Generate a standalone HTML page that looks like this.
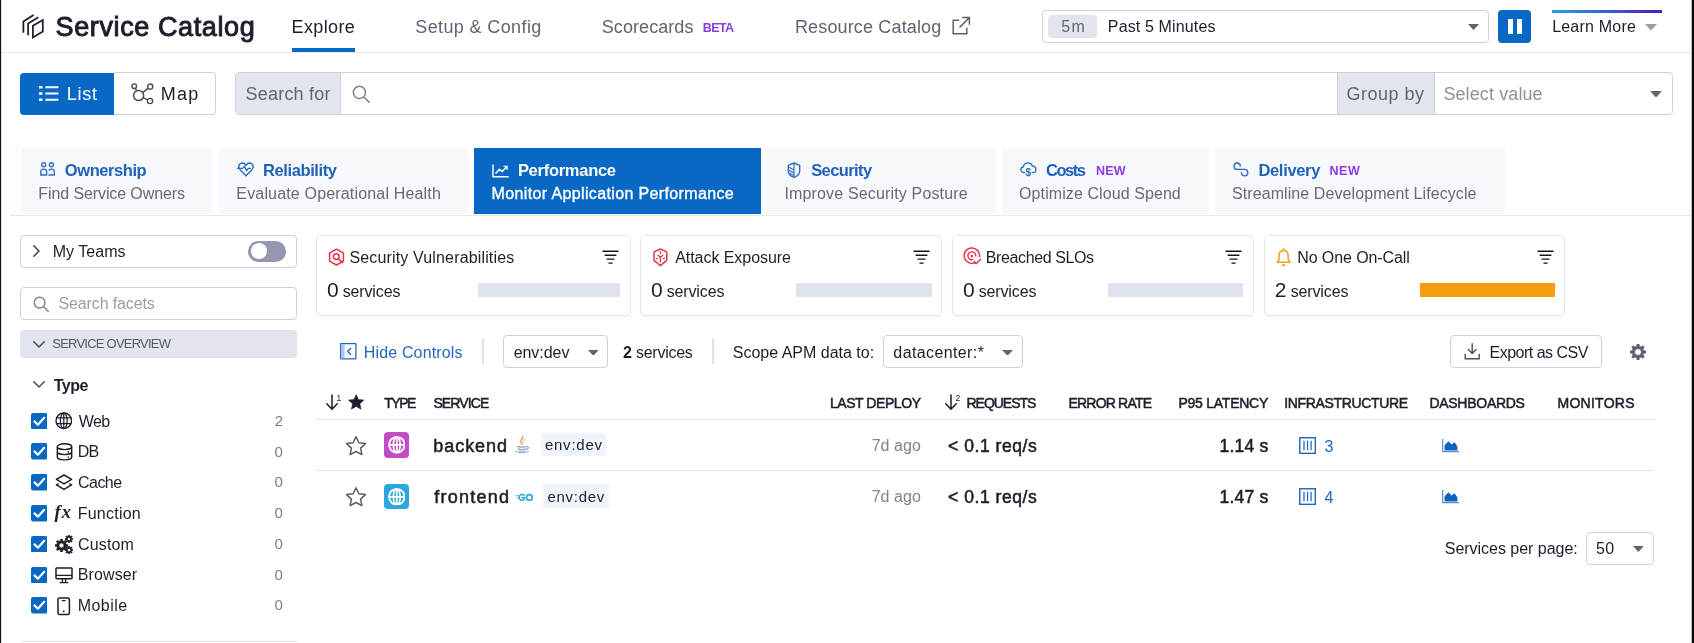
<!DOCTYPE html>
<html lang="en">
<head>
<meta charset="utf-8">
<title>Service Catalog</title>
<style>
html,body{margin:0;padding:0}
body{width:1694px;height:643px;position:relative;overflow:hidden;background:#fff;
 font-family:"Liberation Sans",sans-serif;color:#1c1f2b}
#app{position:absolute;left:0;top:0;width:1694px;height:643px;overflow:hidden;will-change:transform}
#app>div,#app>svg,#app>span{position:absolute;box-sizing:border-box}
#app>span{white-space:nowrap;line-height:1;display:block}
</style>
</head>
<body>
<div id="app">
<div style="left:0px;top:0px;width:1px;height:643px;background:#14141b"></div>
<div style="left:1px;top:0px;width:1px;height:643px;background:#d9d9de"></div>
<div style="left:1692px;top:0px;width:2px;height:643px;background:#0a0a0c"></div>
<div style="left:1691px;top:0px;width:1px;height:643px;background:#b9b9be"></div>
<div style="left:2px;top:52px;width:1689px;height:1px;background:#e6e8ed"></div>
<svg style="left:22px;top:14px;" width="23" height="25" viewBox="0 0 23 25" fill="none"><path d="M1.4 18.8V7.5L11.6 0.9" stroke="#1c1f2b" stroke-width="1.75"/><path d="M6.1 21.3V9.6L16.4 3.2" stroke="#1c1f2b" stroke-width="1.75"/><path d="M10.9 11.7L20.8 6V17.4L10.9 23.4Z" stroke="#1c1f2b" stroke-width="1.75" stroke-linejoin="miter"/></svg>
<div style="left:291.6px;top:47.6px;width:63.8px;height:4.4px;background:#0868c4"></div>
<svg style="left:951px;top:16px;" width="20" height="20" viewBox="0 0 20 20" fill="none"><path d="M8.2 4.2H2.2V17.8H15.8V11.8" stroke="#5f6470" stroke-width="1.5"/><path d="M11.2 1.6H18.4V8.8M18.2 1.8L8.6 11.4" stroke="#5f6470" stroke-width="1.5"/></svg>
<div style="left:1041.8px;top:9.6px;width:447px;height:33.4px;border:1px solid #cdd0da;border-radius:4px;background:#fff"></div>
<div style="left:1048.3px;top:15px;width:49px;height:22.5px;background:#e2e5ed;border-radius:4px"></div>
<svg style="left:1467.5px;top:24px;" width="11" height="6" viewBox="0 0 11 6" fill="none"><path d="M0 0H11L5.5 6Z" fill="#5f6470"/></svg>
<div style="left:1498.3px;top:10px;width:32.7px;height:32.5px;background:#0868c4;border-radius:4px"></div>
<div style="left:1508px;top:19px;width:4.6px;height:14.5px;background:#fff"></div>
<div style="left:1517px;top:19px;width:4.6px;height:14.5px;background:#fff"></div>
<div style="left:1551.6px;top:10px;width:110px;height:2.8px;background:linear-gradient(90deg,#2b9fd9 0%,#3b59cf 55%,#4a1fb8 100%)"></div>
<svg style="left:1645.4px;top:24px;" width="12" height="6.5" viewBox="0 0 12 6.5" fill="none"><path d="M0 0H12L6.0 6.5Z" fill="#9a9da6"/></svg>
<div style="left:20.3px;top:72.5px;width:94.2px;height:42px;background:#0868c4;border-radius:4px 0 0 4px"></div>
<div style="left:114.4px;top:72.4px;width:101.2px;height:42.2px;border:1px solid #cdd0da;border-left:none;border-radius:0 4px 4px 0;background:#fff"></div>
<svg style="left:38.5px;top:85px;" width="20" height="17" viewBox="0 0 20 17" fill="none"><path d="M0 2.2H3.4M0 8.5H3.4M0 14.8H3.4" stroke="#fff" stroke-width="2.6"/><path d="M6.4 2.2H19.4M6.4 8.5H19.4M6.4 14.8H19.4" stroke="#fff" stroke-width="1.9"/></svg>
<svg style="left:130.5px;top:82.5px;" width="23" height="22" viewBox="0 0 23 22" fill="none"><circle cx="7.6" cy="12.6" r="5" stroke="#4a4e5a" stroke-width="1.5"/><circle cx="3.2" cy="3.2" r="2.3" stroke="#4a4e5a" stroke-width="1.4"/><circle cx="19.2" cy="3.6" r="2.6" stroke="#4a4e5a" stroke-width="1.4"/><circle cx="19" cy="18" r="2.6" stroke="#4a4e5a" stroke-width="1.4"/><path d="M4.4 5.2L5.6 8M11.6 9.6L17 5.4M12.2 14.6L16.6 17" stroke="#4a4e5a" stroke-width="1.4"/></svg>
<div style="left:235px;top:72.4px;width:1437.6px;height:42.2px;border:1px solid #cdd0da;border-radius:4px;background:#fff"></div>
<div style="left:236px;top:73.4px;width:105px;height:40.2px;background:#e2e5ed;border-radius:3px 0 0 3px;border-right:1px solid #cdd0da"></div>
<svg style="left:351.8px;top:84.8px;" width="18" height="18" viewBox="0 0 16 16" fill="none"><circle cx="6.6" cy="6.6" r="5.4" stroke="#80848e" stroke-width="1.35"/><path d="M10.6 10.6L15.2 15.2" stroke="#80848e" stroke-width="1.35" stroke-linecap="round"/></svg>
<div style="left:1336.8px;top:73.4px;width:98px;height:40.2px;background:#e2e5ed;border-left:1px solid #cdd0da;border-right:1px solid #cdd0da"></div>
<svg style="left:1650px;top:91px;" width="12" height="6.5" viewBox="0 0 12 6.5" fill="none"><path d="M0 0H12L6.0 6.5Z" fill="#5f6470"/></svg>
<div style="left:10px;top:144px;width:10.5px;height:71px;background:linear-gradient(90deg,#fafbfc,#fdfdfe)"></div>
<div style="left:10px;top:215px;width:1681px;height:1px;background:#e7e8ed"></div>
<div style="left:20.5px;top:148.2px;width:191.5px;height:66px;background:#f7f8fb"></div>
<div style="left:219px;top:148.2px;width:248.5px;height:66px;background:#f7f8fb"></div>
<div style="left:473.8px;top:148.2px;width:287.4px;height:66px;background:#0868c4"></div>
<div style="left:767px;top:148.2px;width:228.5px;height:66px;background:#f7f8fb"></div>
<div style="left:1002.3px;top:148.2px;width:206.7px;height:66px;background:#f7f8fb"></div>
<div style="left:1215px;top:148.2px;width:290px;height:66px;background:#f7f8fb"></div>
<svg style="left:39.6px;top:162.3px;" width="15.4" height="14" viewBox="0 0 15.4 14" fill="none"><circle cx="3.7" cy="2.7" r="2" stroke="#2a6cc0" stroke-width="1.35"/><circle cx="11.4" cy="2.7" r="2" stroke="#2a6cc0" stroke-width="1.35"/><path d="M0.75 13V9.9C0.75 8.1 2 7.1 3.7 7.1S6.65 8.1 6.65 9.9V13H0.75Z" stroke="#2a6cc0" stroke-width="1.35" stroke-linejoin="round"/><path d="M8.9 13H14.4V9.9C14.4 8.1 13.1 7.1 11.4 7.1C10.4 7.1 9.6 7.4 9.1 8" stroke="#2a6cc0" stroke-width="1.35" stroke-linecap="round" stroke-linejoin="round"/></svg>
<svg style="left:236.5px;top:162px;" width="18" height="15" viewBox="0 0 18 15" fill="none"><path d="M9 13.8L3 7.8M15 7.8L9 13.8M2.4 6.4C1.4 4.6 1.8 2.6 3.4 1.6C5.2 0.6 7.4 1.2 9 3.2C10.6 1.2 12.8 0.6 14.6 1.6C16.2 2.6 16.6 4.6 15.6 6.4" stroke="#2a6cc0" stroke-width="1.4" stroke-linecap="round"/><path d="M0.6 6.4H5.6L7.4 4.2L9.6 8.6L11.4 6.4H13.4" stroke="#2a6cc0" stroke-width="1.3" stroke-linejoin="round" stroke-linecap="round"/></svg>
<svg style="left:491.5px;top:163.5px;" width="17" height="14" viewBox="0 0 17 14" fill="none"><path d="M1 0.5V12.8H16.6" stroke="#fff" stroke-width="1.5"/><path d="M3.6 9.4L7.4 5.2L10.2 7.6L14.6 2.8" stroke="#fff" stroke-width="1.5" stroke-linejoin="round"/><path d="M11.6 2.4H15V5.8" stroke="#fff" stroke-width="1.4"/></svg>
<svg style="left:786.6px;top:161.6px;" width="14" height="16.4" viewBox="0 0 14 16.4" fill="none"><path d="M7 1L12.7 3.3V9.3C12.7 12 10.2 14.2 7 15.4C3.8 14.2 1.3 12 1.3 9.3V3.3Z" stroke="#2a6cc0" stroke-width="1.35" stroke-linejoin="round"/><path d="M7 1V15.4M1.5 4.9L7 8.1M1.5 7.9L7 11.1M2.3 10.9L7 13.7" stroke="#2a6cc0" stroke-width="1.15"/></svg>
<svg style="left:1019.8px;top:162.2px;" width="17" height="15" viewBox="0 0 17 15" fill="none"><path d="M4.8 10.6H4C2.3 10.6 0.9 9.3 0.9 7.7C0.9 6.3 1.9 5.1 3.4 4.9C3.6 2.7 5.5 0.9 8 0.9C10.1 0.9 11.8 2.2 12.4 4C14.3 4.2 15.9 5.6 15.9 7.4C15.9 9.2 14.5 10.6 12.6 10.6H12" stroke="#2a6cc0" stroke-width="1.3" stroke-linecap="round"/><text x="8.4" y="13.6" text-anchor="middle" font-family="Liberation Sans, sans-serif" font-weight="700" font-size="10" fill="#2a6cc0">$</text></svg>
<svg style="left:1233.2px;top:161.8px;" width="16" height="15.4" viewBox="0 0 16 15.4" fill="none"><path d="M4.2 7.4C2.4 7.4 1 6 1 4.2S2.4 1 4.2 1S7.3 2.4 7.3 4.2" stroke="#2a6cc0" stroke-width="1.35" stroke-linecap="round"/><path d="M4.2 7.4H11.6C13.5 7.4 14.8 8.9 14.8 10.6S13.5 13.9 11.6 13.9S8.5 12.4 8.5 10.6" stroke="#2a6cc0" stroke-width="1.35" stroke-linecap="round"/></svg>
<div style="left:20px;top:234.5px;width:277px;height:33px;border:1px solid #cdd0da;border-radius:4px;background:#fff"></div>
<svg style="left:33.3px;top:245.2px;" width="7" height="12" viewBox="0 0 7 12" fill="none"><path d="M0.8 0.8L6 6L0.8 11.2" stroke="#3d414d" stroke-width="1.5" stroke-linecap="round" stroke-linejoin="round"/></svg>
<div style="left:248.3px;top:240.5px;width:37.5px;height:21px;background:#9397b1;border-radius:11px"></div>
<div style="left:250.8px;top:243px;width:16px;height:16px;background:#fff;border-radius:8px"></div>
<div style="left:20px;top:286.6px;width:277px;height:33.2px;border:1px solid #cdd0da;border-radius:4px;background:#fff"></div>
<svg style="left:32.5px;top:296.2px;" width="16" height="16" viewBox="0 0 16 16" fill="none"><circle cx="6.6" cy="6.6" r="5.4" stroke="#7b7f8a" stroke-width="1.4"/><path d="M10.6 10.6L15.2 15.2" stroke="#7b7f8a" stroke-width="1.4" stroke-linecap="round"/></svg>
<div style="left:20.3px;top:329.6px;width:276.4px;height:28px;background:#e2e5ed;border-radius:4px"></div>
<svg style="left:33.3px;top:340.5px;" width="12" height="7" viewBox="0 0 12 7" fill="none"><path d="M0.8 0.8L6 6L11.2 0.8" stroke="#4a4e5a" stroke-width="1.5" stroke-linecap="round" stroke-linejoin="round"/></svg>
<svg style="left:33.3px;top:381px;" width="12" height="7" viewBox="0 0 12 7" fill="none"><path d="M0.8 0.8L6 6L11.2 0.8" stroke="#4a4e5a" stroke-width="1.5" stroke-linecap="round" stroke-linejoin="round"/></svg>
<svg style="left:30.7px;top:412.7px;" width="16.5" height="16.5" viewBox="0 0 16.5 16.5" fill="none"><rect x="0" y="0" width="16.5" height="16.5" rx="2.2" fill="#0868c4"/><path d="M3.5 8.4L6.9 11.7L13.2 4.8" stroke="#fff" stroke-width="2.2" stroke-linecap="round" stroke-linejoin="round"/></svg>
<svg style="left:54.900000000000006px;top:412.09999999999997px;" width="17.6" height="17.6" viewBox="0 0 17.6 17.6" fill="none"><circle cx="8.8" cy="8.8" r="7.8" stroke="#1c1f2b" stroke-width="1.4"/><ellipse cx="8.8" cy="8.8" rx="3.43" ry="7.8" stroke="#1c1f2b" stroke-width="1.26"/><path d="M1.52 5.99H16.08M1.52 11.61H16.08M8.8 1V16.6" stroke="#1c1f2b" stroke-width="1.26"/></svg>
<svg style="left:30.7px;top:443.46999999999997px;" width="16.5" height="16.5" viewBox="0 0 16.5 16.5" fill="none"><rect x="0" y="0" width="16.5" height="16.5" rx="2.2" fill="#0868c4"/><path d="M3.5 8.4L6.9 11.7L13.2 4.8" stroke="#fff" stroke-width="2.2" stroke-linecap="round" stroke-linejoin="round"/></svg>
<svg style="left:55.6px;top:442.86999999999995px;" width="17" height="18" viewBox="0 0 17 18" fill="none"><ellipse cx="8.5" cy="3.7" rx="7.2" ry="2.9" stroke="#1c1f2b" stroke-width="1.4"/><path d="M1.3 3.7V14C1.3 15.6 4.5 16.9 8.5 16.9S15.7 15.6 15.7 14V3.7M1.3 8.7C1.3 10.3 4.5 11.6 8.5 11.6S15.7 10.3 15.7 8.7" stroke="#1c1f2b" stroke-width="1.4"/><circle cx="12.3" cy="8.9" r="0.8" fill="#1c1f2b"/><circle cx="12.3" cy="14" r="0.8" fill="#1c1f2b"/></svg>
<svg style="left:30.7px;top:474.24px;" width="16.5" height="16.5" viewBox="0 0 16.5 16.5" fill="none"><rect x="0" y="0" width="16.5" height="16.5" rx="2.2" fill="#0868c4"/><path d="M3.5 8.4L6.9 11.7L13.2 4.8" stroke="#fff" stroke-width="2.2" stroke-linecap="round" stroke-linejoin="round"/></svg>
<svg style="left:55px;top:473.94px;" width="18" height="17" viewBox="0 0 18 17" fill="none"><path d="M9 1L16.6 5.4L9 9.8L1.4 5.4Z" stroke="#1c1f2b" stroke-width="1.5" stroke-linejoin="round"/><path d="M3.6 9.6L1.4 10.9L9 15.4L16.6 10.9L14.4 9.6" stroke="#1c1f2b" stroke-width="1.5" stroke-linejoin="round"/></svg>
<svg style="left:30.7px;top:505.01000000000005px;" width="16.5" height="16.5" viewBox="0 0 16.5 16.5" fill="none"><rect x="0" y="0" width="16.5" height="16.5" rx="2.2" fill="#0868c4"/><path d="M3.5 8.4L6.9 11.7L13.2 4.8" stroke="#fff" stroke-width="2.2" stroke-linecap="round" stroke-linejoin="round"/></svg>
<span style="left:54.6px;top:503px;font-family:'Liberation Serif',serif;font-style:italic;font-weight:700;font-size:18.5px;line-height:1;color:#1c1f2b;letter-spacing:1px;white-space:nowrap">fx</span>
<svg style="left:30.7px;top:535.78px;" width="16.5" height="16.5" viewBox="0 0 16.5 16.5" fill="none"><rect x="0" y="0" width="16.5" height="16.5" rx="2.2" fill="#0868c4"/><path d="M3.5 8.4L6.9 11.7L13.2 4.8" stroke="#fff" stroke-width="2.2" stroke-linecap="round" stroke-linejoin="round"/></svg>
<svg style="left:54.8px;top:538.78px;" width="13" height="13" viewBox="0 0 12.2 12.2" fill="none"><path d="M5.08 1.70L5.29 0.05L6.91 0.05L7.12 1.70L8.49 2.27L9.80 1.25L10.95 2.40L9.93 3.71L10.50 5.08L12.15 5.29L12.15 6.91L10.50 7.12L9.93 8.49L10.95 9.80L9.80 10.95L8.49 9.93L7.12 10.50L6.91 12.15L5.29 12.15L5.08 10.50L3.71 9.93L2.40 10.95L1.25 9.80L2.27 8.49L1.70 7.12L0.05 6.91L0.05 5.29L1.70 5.08L2.27 3.71L1.25 2.40L2.40 1.25L3.71 2.27ZM8.42 6.10A2.32 2.32 0 1 0 3.78 6.10A2.32 2.32 0 1 0 8.42 6.10Z" fill="#1c1f2b" fill-rule="evenodd" stroke="#1c1f2b" stroke-width="0.6" stroke-linejoin="round"/></svg>
<svg style="left:65.4px;top:534.78px;" width="8" height="8" viewBox="0 0 7.7 7.7" fill="none"><path d="M3.21 1.07L3.34 0.03L4.36 0.03L4.49 1.07L5.36 1.43L6.19 0.79L6.91 1.51L6.27 2.34L6.63 3.21L7.67 3.34L7.67 4.36L6.63 4.49L6.27 5.36L6.91 6.19L6.19 6.91L5.36 6.27L4.49 6.63L4.36 7.67L3.34 7.67L3.21 6.63L2.34 6.27L1.51 6.91L0.79 6.19L1.43 5.36L1.07 4.49L0.03 4.36L0.03 3.34L1.07 3.21L1.43 2.34L0.79 1.51L1.51 0.79L2.34 1.43ZM5.39 3.85A1.54 1.54 0 1 0 2.31 3.85A1.54 1.54 0 1 0 5.39 3.85Z" fill="#1c1f2b" fill-rule="evenodd" stroke="#1c1f2b" stroke-width="0.6" stroke-linejoin="round"/></svg>
<svg style="left:65.4px;top:545.58px;" width="8" height="8" viewBox="0 0 7.7 7.7" fill="none"><path d="M3.21 1.07L3.34 0.03L4.36 0.03L4.49 1.07L5.36 1.43L6.19 0.79L6.91 1.51L6.27 2.34L6.63 3.21L7.67 3.34L7.67 4.36L6.63 4.49L6.27 5.36L6.91 6.19L6.19 6.91L5.36 6.27L4.49 6.63L4.36 7.67L3.34 7.67L3.21 6.63L2.34 6.27L1.51 6.91L0.79 6.19L1.43 5.36L1.07 4.49L0.03 4.36L0.03 3.34L1.07 3.21L1.43 2.34L0.79 1.51L1.51 0.79L2.34 1.43ZM5.39 3.85A1.54 1.54 0 1 0 2.31 3.85A1.54 1.54 0 1 0 5.39 3.85Z" fill="#1c1f2b" fill-rule="evenodd" stroke="#1c1f2b" stroke-width="0.6" stroke-linejoin="round"/></svg>
<svg style="left:30.7px;top:566.55px;" width="16.5" height="16.5" viewBox="0 0 16.5 16.5" fill="none"><rect x="0" y="0" width="16.5" height="16.5" rx="2.2" fill="#0868c4"/><path d="M3.5 8.4L6.9 11.7L13.2 4.8" stroke="#fff" stroke-width="2.2" stroke-linecap="round" stroke-linejoin="round"/></svg>
<svg style="left:55px;top:566.75px;" width="18" height="17" viewBox="0 0 18 17" fill="none"><rect x="1" y="1" width="16" height="10.8" rx="0.8" stroke="#1c1f2b" stroke-width="1.5"/><path d="M1 8.4H17M7.4 12V15.4M10.6 12V15.4M4.6 15.6H13.4" stroke="#1c1f2b" stroke-width="1.4"/></svg>
<svg style="left:30.7px;top:597.3199999999999px;" width="16.5" height="16.5" viewBox="0 0 16.5 16.5" fill="none"><rect x="0" y="0" width="16.5" height="16.5" rx="2.2" fill="#0868c4"/><path d="M3.5 8.4L6.9 11.7L13.2 4.8" stroke="#fff" stroke-width="2.2" stroke-linecap="round" stroke-linejoin="round"/></svg>
<svg style="left:57.3px;top:596.52px;" width="14" height="19" viewBox="0 0 14 19" fill="none"><rect x="1" y="1" width="11.4" height="16.6" rx="1.6" stroke="#1c1f2b" stroke-width="1.5"/><path d="M4.8 3.6H8.6" stroke="#1c1f2b" stroke-width="1.2"/><circle cx="6.7" cy="14.4" r="0.9" fill="#1c1f2b"/></svg>
<div style="left:20.5px;top:640.6px;width:276px;height:1.2px;background:#dfe2e9"></div>
<div style="left:316.2px;top:234.5px;width:314.8px;height:81px;border:1px solid #e2e4eb;border-radius:5px;background:#fff;box-shadow:0 1px 2px rgba(40,45,70,0.05)"></div>
<svg style="left:602.3px;top:250.2px;" width="17" height="14.5" viewBox="0 0 17 14.5" fill="none"><path d="M0.5 1.2H16.5M2.7 5.2H14.4M4.6 9.1H12.5M6.5 13.1H10.6" stroke="#14161f" stroke-width="1.45"/></svg>
<div style="left:478.2px;top:283.3px;width:141.7px;height:13.8px;background:#dfe3ed"></div>
<div style="left:640.2px;top:234.5px;width:301.79999999999995px;height:81px;border:1px solid #e2e4eb;border-radius:5px;background:#fff;box-shadow:0 1px 2px rgba(40,45,70,0.05)"></div>
<svg style="left:913.3px;top:250.2px;" width="17" height="14.5" viewBox="0 0 17 14.5" fill="none"><path d="M0.5 1.2H16.5M2.7 5.2H14.4M4.6 9.1H12.5M6.5 13.1H10.6" stroke="#14161f" stroke-width="1.45"/></svg>
<div style="left:796.4px;top:283.3px;width:135.20000000000005px;height:13.8px;background:#dfe3ed"></div>
<div style="left:952.2px;top:234.5px;width:301.79999999999995px;height:81px;border:1px solid #e2e4eb;border-radius:5px;background:#fff;box-shadow:0 1px 2px rgba(40,45,70,0.05)"></div>
<svg style="left:1225.3px;top:250.2px;" width="17" height="14.5" viewBox="0 0 17 14.5" fill="none"><path d="M0.5 1.2H16.5M2.7 5.2H14.4M4.6 9.1H12.5M6.5 13.1H10.6" stroke="#14161f" stroke-width="1.45"/></svg>
<div style="left:1107.5px;top:283.3px;width:135.9000000000001px;height:13.8px;background:#dfe3ed"></div>
<div style="left:1264.2px;top:234.5px;width:301.0px;height:81px;border:1px solid #e2e4eb;border-radius:5px;background:#fff;box-shadow:0 1px 2px rgba(40,45,70,0.05)"></div>
<svg style="left:1536.5px;top:250.2px;" width="17" height="14.5" viewBox="0 0 17 14.5" fill="none"><path d="M0.5 1.2H16.5M2.7 5.2H14.4M4.6 9.1H12.5M6.5 13.1H10.6" stroke="#14161f" stroke-width="1.45"/></svg>
<div style="left:1419.7px;top:283.3px;width:135.0999999999999px;height:13.8px;background:#f89d0e"></div>
<svg style="left:327.5px;top:248px;" width="17" height="19" viewBox="0 0 17 19" fill="none"><path d="M8.5 1.2L15.4 5.1V13.1L8.5 17L1.6 13.1V5.1Z" stroke="#e0354b" stroke-width="1.5" stroke-linejoin="round"/><circle cx="8.3" cy="8.6" r="2.9" stroke="#e0354b" stroke-width="1.5"/><path d="M10.4 10.8L15 14.8" stroke="#e0354b" stroke-width="1.6"/></svg>
<svg style="left:653.3px;top:247.6px;" width="15" height="19" viewBox="0 0 15 19" fill="none"><path d="M7.4 1L13.8 3.9V12.4L7.4 17.6L1 12.4V3.9Z" stroke="#e0354b" stroke-width="1.45" stroke-linejoin="round"/><path d="M7.4 14.2V9.4L4.9 7.1M7.4 9.4L9.9 7.1M7.4 3.6V5.6M3.3 10.6H4.5M10.3 10.6H11.5" stroke="#e0354b" stroke-width="1.3" stroke-linecap="round" stroke-linejoin="round"/></svg>
<svg style="left:963px;top:247.2px;" width="18.5" height="18.5" viewBox="0 0 18.5 18.5" fill="none"><path d="M12.2 15.6A7.7 7.7 0 1 1 16.5 9.6" stroke="#e0354b" stroke-width="1.5" stroke-linecap="round"/><path d="M9.6 12.6A3.9 3.9 0 1 1 12.7 8.9" stroke="#e0354b" stroke-width="1.4" stroke-linecap="round"/><circle cx="8.8" cy="8.9" r="1.25" fill="#e0354b"/><path d="M11.2 14.6L13.3 16.6L17.4 12.4" stroke="#e0354b" stroke-width="1.5" stroke-linecap="round" stroke-linejoin="round"/></svg>
<svg style="left:1276.4px;top:248px;" width="15.4" height="19" viewBox="0 0 15.4 19" fill="none"><path d="M7.6 2.4C4.7 2.4 3.1 4.7 3.1 7.4V11.2L1.2 14.2H14L12.1 11.2V7.4C12.1 4.7 10.5 2.4 7.6 2.4Z" stroke="#f39a1f" stroke-width="1.45" stroke-linejoin="round"/><path d="M7.6 0.8V2.2" stroke="#f39a1f" stroke-width="1.5" stroke-linecap="round"/><path d="M6.7 17.2H8.5" stroke="#f39a1f" stroke-width="1.8" stroke-linecap="round"/></svg>
<svg style="left:339.6px;top:343.2px;" width="17" height="17" viewBox="0 0 17 17" fill="none"><rect x="0.7" y="0.7" width="15.2" height="15.2" rx="0.4" stroke="#2367ba" stroke-width="1.3"/><rect x="1.2" y="1.2" width="3.4" height="14.2" fill="#a9c6ea"/><path d="M10.6 5.4L7.6 8.3L10.6 11.2" stroke="#2367ba" stroke-width="1.4" stroke-linecap="round" stroke-linejoin="round"/></svg>
<div style="left:482px;top:339px;width:1.8px;height:25px;background:#dfe2e9"></div>
<div style="left:503px;top:335px;width:105.4px;height:33px;border:1px solid #cdd0da;border-radius:4px;background:#fff"></div>
<svg style="left:587.9px;top:349.6px;" width="10.6" height="5.8" viewBox="0 0 10.6 5.8" fill="none"><path d="M0 0H10.6L5.3 5.8Z" fill="#5f6470"/></svg>
<div style="left:712.2px;top:339px;width:1.8px;height:25px;background:#dfe2e9"></div>
<div style="left:882.8px;top:335px;width:140.6px;height:33px;border:1px solid #cdd0da;border-radius:4px;background:#fff"></div>
<svg style="left:1002.4px;top:349.6px;" width="11" height="5.8" viewBox="0 0 11 5.8" fill="none"><path d="M0 0H11L5.5 5.8Z" fill="#5f6470"/></svg>
<div style="left:1450px;top:335px;width:152px;height:33px;border:1px solid #cdd0da;border-radius:4px;background:#fff"></div>
<svg style="left:1464.3px;top:343px;" width="17" height="17" viewBox="0 0 17 17" fill="none"><path d="M8.2 0.8V10.2M4.3 6.5L8.2 10.4L12.1 6.5" stroke="#4a4e5a" stroke-width="1.4" stroke-linecap="round" stroke-linejoin="round"/><path d="M1.2 10.8V15.8H15.2V10.8" stroke="#4a4e5a" stroke-width="1.4"/></svg>
<svg style="left:1629.6px;top:344.3px;" width="16" height="16" viewBox="0 0 15.4 15.4" fill="none"><path d="M6.41 2.15L6.67 0.07L8.73 0.07L8.99 2.15L10.72 2.87L12.37 1.58L13.82 3.03L12.53 4.68L13.25 6.41L15.33 6.67L15.33 8.73L13.25 8.99L12.53 10.72L13.82 12.37L12.37 13.82L10.72 12.53L8.99 13.25L8.73 15.33L6.67 15.33L6.41 13.25L4.68 12.53L3.03 13.82L1.58 12.37L2.87 10.72L2.15 8.99L0.07 8.73L0.07 6.67L2.15 6.41L2.87 4.68L1.58 3.03L3.03 1.58L4.68 2.87ZM10.93 7.70A3.23 3.23 0 1 0 4.47 7.70A3.23 3.23 0 1 0 10.93 7.70Z" fill="#5a5e6b" fill-rule="evenodd" stroke="#5a5e6b" stroke-width="0.6" stroke-linejoin="round"/></svg>
<svg style="left:326.3px;top:394.2px;" width="16" height="17" viewBox="0 0 16 17" fill="none"><path d="M6 1V15M0.8 9.8L6 15.2L11.2 9.8" stroke="#1c1f2b" stroke-width="1.5" stroke-linecap="round" stroke-linejoin="round"/><text x="10.6" y="7" font-family="Liberation Sans, sans-serif" font-size="8.5" fill="#1c1f2b">1</text></svg>
<svg style="left:348.2px;top:393.8px;" width="16.4" height="15.8" viewBox="0 0 16 15" fill="none"><path d="M8 0.3L10.2 5.1L15.6 5.7L11.6 9.3L12.7 14.6L8 11.9L3.3 14.6L4.4 9.3L0.4 5.7L5.8 5.1Z" fill="#1c1f2b" stroke="#1c1f2b" stroke-width="0.5" stroke-linejoin="round"/></svg>
<svg style="left:944.8px;top:394.2px;" width="16" height="17" viewBox="0 0 16 17" fill="none"><path d="M6 1V15M0.8 9.8L6 15.2L11.2 9.8" stroke="#1c1f2b" stroke-width="1.5" stroke-linecap="round" stroke-linejoin="round"/><text x="10.6" y="7" font-family="Liberation Sans, sans-serif" font-size="8.5" fill="#1c1f2b">2</text></svg>
<div style="left:316.3px;top:419px;width:1337.5px;height:1.3px;background:#e1e3ea"></div>
<div style="left:316.3px;top:470px;width:1337.5px;height:1.3px;background:#e1e3ea"></div>
<svg style="left:345.2px;top:434.7px;" width="22" height="21" viewBox="0 0 21 20" fill="none"><path d="M10.5 1.6L13.2 7.4L19.5 8.2L14.9 12.5L16.1 18.7L10.5 15.7L4.9 18.7L6.1 12.5L1.5 8.2L7.8 7.4Z" stroke="#5a5e6a" stroke-width="1.45" stroke-linejoin="round"/></svg>
<div style="left:383.9px;top:432.3px;width:25.4px;height:25.6px;background:#c24cc6;border-radius:4px"></div>
<svg style="left:387.8px;top:436.3px;" width="17.6" height="17.6" viewBox="0 0 17.6 17.6" fill="none"><circle cx="8.8" cy="8.8" r="7.8" stroke="#ffffff" stroke-width="1.9"/><ellipse cx="8.8" cy="8.8" rx="3.43" ry="7.8" stroke="#ffffff" stroke-width="1.71"/><path d="M1 8.8H16.6M8.8 1V16.6" stroke="#ffffff" stroke-width="1.71"/></svg>
<div style="left:540.6px;top:432.90000000000003px;width:65.39999999999998px;height:23.4px;background:#f1f5fb;border-radius:3px"></div>
<svg style="left:1298.6px;top:436.6px;" width="17.3" height="17.3" viewBox="0 0 18 18" fill="none"><rect x="0.8" y="0.8" width="16.2" height="16.2" stroke="#2367ba" stroke-width="1.5"/><path d="M5.2 4V13.8M8.9 4V13.8M12.6 4V13.8" stroke="#2367ba" stroke-width="1.3"/></svg>
<svg style="left:1442px;top:438.7px;" width="18" height="14" viewBox="0 0 18 14" fill="none"><path d="M0.7 0V12.6H17" stroke="#2367ba" stroke-width="1.2" opacity="0.75"/><path d="M2.6 11.4V6.2L6.4 2.2L9.6 5.6L12.6 3.2L15.4 7.6V11.4Z" fill="#0f63be"/></svg>
<svg style="left:345.2px;top:486.0px;" width="22" height="21" viewBox="0 0 21 20" fill="none"><path d="M10.5 1.6L13.2 7.4L19.5 8.2L14.9 12.5L16.1 18.7L10.5 15.7L4.9 18.7L6.1 12.5L1.5 8.2L7.8 7.4Z" stroke="#5a5e6a" stroke-width="1.45" stroke-linejoin="round"/></svg>
<div style="left:383.9px;top:483.6px;width:25.4px;height:25.6px;background:#2aa7dc;border-radius:4px"></div>
<svg style="left:387.8px;top:487.6px;" width="17.6" height="17.6" viewBox="0 0 17.6 17.6" fill="none"><circle cx="8.8" cy="8.8" r="7.8" stroke="#ffffff" stroke-width="1.9"/><ellipse cx="8.8" cy="8.8" rx="3.43" ry="7.8" stroke="#ffffff" stroke-width="1.71"/><path d="M1 8.8H16.6M8.8 1V16.6" stroke="#ffffff" stroke-width="1.71"/></svg>
<div style="left:543px;top:484.20000000000005px;width:66px;height:23.4px;background:#f1f5fb;border-radius:3px"></div>
<svg style="left:1298.6px;top:487.90000000000003px;" width="17.3" height="17.3" viewBox="0 0 18 18" fill="none"><rect x="0.8" y="0.8" width="16.2" height="16.2" stroke="#2367ba" stroke-width="1.5"/><path d="M5.2 4V13.8M8.9 4V13.8M12.6 4V13.8" stroke="#2367ba" stroke-width="1.3"/></svg>
<svg style="left:1442px;top:490.0px;" width="18" height="14" viewBox="0 0 18 14" fill="none"><path d="M0.7 0V12.6H17" stroke="#2367ba" stroke-width="1.2" opacity="0.75"/><path d="M2.6 11.4V6.2L6.4 2.2L9.6 5.6L12.6 3.2L15.4 7.6V11.4Z" fill="#0f63be"/></svg>
<svg style="left:513.6px;top:436px;" width="16" height="19" viewBox="0 0 16 19" fill="none"><path d="M8.4 0.6C9.6 2.6 5.6 4 7.2 6.4C7.6 7 8.2 7.4 8.2 8.4" stroke="#f0883a" stroke-width="1.2" stroke-linecap="round"/><path d="M10.6 3.4C9.4 4.4 9.2 5.2 10 6.4" stroke="#f4a86a" stroke-width="1" stroke-linecap="round"/><path d="M3.4 10.4C6 11.2 10 11.2 12.4 10.4M4 12.8C6.4 13.6 9.6 13.6 11.8 12.8M12.8 10.6C14.8 10.4 15 12.6 12.6 13.4" stroke="#7b9cc4" stroke-width="1.1" stroke-linecap="round"/><path d="M1.6 15.6C4.6 17 11.4 17 14.4 15.6M4.8 14.8C7 15.4 9.4 15.4 11.2 14.8" stroke="#9db6d6" stroke-width="1.1" stroke-linecap="round"/></svg>
<svg style="left:515px;top:492.6px;" width="19" height="9" viewBox="0 0 19 9" fill="none"><path d="M0.4 2.6H3.6M1.6 4.6H3.4" stroke="#5fc3e6" stroke-width="0.9" stroke-linecap="round"/><path d="M9.4 2.6C8.6 1.6 7.6 1.2 6.6 1.4C4.8 1.8 4 3.4 4.2 4.8C4.4 6.6 6 7.6 7.6 7.2C8.8 7 9.6 6.2 9.8 4.8H7" stroke="#2ba6da" stroke-width="1.5" stroke-linecap="round" stroke-linejoin="round"/><ellipse cx="14.4" cy="4.4" rx="2.9" ry="2.8" stroke="#2ba6da" stroke-width="1.6"/></svg>
<div style="left:1586px;top:531.6px;width:67.8px;height:33.2px;border:1px solid #cdd0da;border-radius:4px;background:#fff"></div>
<svg style="left:1632.5px;top:545.5px;" width="10.8" height="6" viewBox="0 0 10.8 6" fill="none"><path d="M0 0H10.8L5.4 6Z" fill="#5f6470"/></svg>
<span id="t0" style="left:55.54px;top:14px;font-size:27px;color:#1c1f2b;letter-spacing:0.617px;-webkit-text-stroke:0.95px #1c1f2b;">Service Catalog</span>
<span id="t1" style="left:291.54px;top:18px;font-size:18px;color:#1c1f2b;letter-spacing:0.373px;">Explore</span>
<span id="t2" style="left:415.30px;top:18px;font-size:18px;color:#5f6470;letter-spacing:0.377px;">Setup &amp; Config</span>
<span id="t3" style="left:601.80px;top:18px;font-size:18px;color:#5f6470;letter-spacing:0.063px;">Scorecards</span>
<span id="t4" style="left:702.86px;top:22px;font-size:12.5px;font-weight:700;color:#8d3be6;letter-spacing:-0.652px;">BETA</span>
<span id="t5" style="left:794.94px;top:18px;font-size:18px;color:#5f6470;letter-spacing:0.151px;">Resource Catalog</span>
<span id="t6" style="left:1061.20px;top:19px;font-size:16px;color:#5f6470;letter-spacing:1.300px;">5m</span>
<span id="t7" style="left:1107.84px;top:19px;font-size:16px;color:#1c1f2b;letter-spacing:0.139px;">Past 5 Minutes</span>
<span id="t8" style="left:1552.14px;top:19px;font-size:16px;color:#1c1f2b;letter-spacing:0.209px;">Learn More</span>
<span id="t9" style="left:66.64px;top:85px;font-size:18px;color:#ffffff;letter-spacing:0.786px;">List</span>
<span id="t10" style="left:160.84px;top:85px;font-size:18px;color:#1c1f2b;letter-spacing:1.212px;">Map</span>
<span id="t11" style="left:245.50px;top:85px;font-size:18px;color:#5f6470;letter-spacing:0.216px;">Search for</span>
<span id="t12" style="left:1346.60px;top:85px;font-size:18px;color:#5f6470;letter-spacing:0.471px;">Group by</span>
<span id="t13" style="left:1443.40px;top:85px;font-size:18px;color:#8e919b;letter-spacing:0.107px;">Select value</span>
<span id="t14" style="left:64.87px;top:162px;font-size:16.5px;font-weight:700;color:#1f62b8;letter-spacing:-0.435px;">Ownership</span>
<span id="t15" style="left:38.34px;top:186px;font-size:16px;color:#666a76;letter-spacing:-0.102px;">Find Service Owners</span>
<span id="t16" style="left:263.00px;top:162px;font-size:16.5px;font-weight:700;color:#1f62b8;letter-spacing:-0.391px;">Reliability</span>
<span id="t17" style="left:236.34px;top:186px;font-size:16px;color:#666a76;letter-spacing:0.167px;">Evaluate Operational Health</span>
<span id="t18" style="left:517.90px;top:162px;font-size:16.5px;font-weight:700;color:#ffffff;letter-spacing:-0.274px;">Performance</span>
<span id="t19" style="left:491.60px;top:186px;font-size:16px;color:#ffffff;letter-spacing:0.365px;-webkit-text-stroke:0.35px #fff;">Monitor Application Performance</span>
<span id="t20" style="left:811.17px;top:162px;font-size:16.5px;font-weight:700;color:#1f62b8;letter-spacing:-0.581px;">Security</span>
<span id="t21" style="left:784.44px;top:186px;font-size:16px;color:#666a76;letter-spacing:0.155px;">Improve Security Posture</span>
<span id="t22" style="left:1045.97px;top:162px;font-size:16.5px;font-weight:700;color:#1f62b8;letter-spacing:-1.498px;">Costs</span>
<span id="t23" style="left:1095.96px;top:165px;font-size:12.5px;font-weight:700;color:#8d3be6;letter-spacing:0.220px;">NEW</span>
<span id="t24" style="left:1019.10px;top:186px;font-size:16px;color:#666a76;letter-spacing:0.083px;">Optimize Cloud Spend</span>
<span id="t25" style="left:1258.40px;top:162px;font-size:16.5px;font-weight:700;color:#1f62b8;letter-spacing:-0.314px;">Delivery</span>
<span id="t26" style="left:1329.46px;top:165px;font-size:12.5px;font-weight:700;color:#8d3be6;letter-spacing:0.620px;">NEW</span>
<span id="t27" style="left:1232.00px;top:186px;font-size:16px;color:#666a76;letter-spacing:0.084px;">Streamline Development Lifecycle</span>
<span id="t28" style="left:52.64px;top:244px;font-size:16px;color:#1c1f2b;letter-spacing:0.052px;">My Teams</span>
<span id="t29" style="left:58.50px;top:296px;font-size:16px;color:#9a9da6;letter-spacing:-0.130px;">Search facets</span>
<span id="t30" style="left:52.30px;top:337px;font-size:13px;color:#555a66;letter-spacing:-0.772px;">SERVICE OVERVIEW</span>
<span id="t31" style="left:53.75px;top:378px;font-size:16px;font-weight:700;color:#1c1f2b;letter-spacing:-0.530px;">Type</span>
<span id="t32" style="left:78.73px;top:414px;font-size:16px;color:#1c1f2b;letter-spacing:-0.614px;">Web</span>
<span id="t33" style="left:274.74px;top:413px;font-size:15px;color:#7a7e89;">2</span>
<span id="t34" style="left:77.64px;top:444px;font-size:16px;color:#1c1f2b;letter-spacing:-0.646px;">DB</span>
<span id="t35" style="left:274.60px;top:444px;font-size:15px;color:#7a7e89;">0</span>
<span id="t36" style="left:78.07px;top:475px;font-size:16px;color:#1c1f2b;letter-spacing:-0.556px;">Cache</span>
<span id="t37" style="left:274.60px;top:474px;font-size:15px;color:#7a7e89;">0</span>
<span id="t38" style="left:77.64px;top:506px;font-size:16px;color:#1c1f2b;letter-spacing:0.254px;">Function</span>
<span id="t39" style="left:274.60px;top:505px;font-size:15px;color:#7a7e89;">0</span>
<span id="t40" style="left:78.07px;top:537px;font-size:16px;color:#1c1f2b;letter-spacing:0.138px;">Custom</span>
<span id="t41" style="left:274.60px;top:536px;font-size:15px;color:#7a7e89;">0</span>
<span id="t42" style="left:77.64px;top:567px;font-size:16px;color:#1c1f2b;letter-spacing:0.138px;">Browser</span>
<span id="t43" style="left:274.60px;top:567px;font-size:15px;color:#7a7e89;">0</span>
<span id="t44" style="left:77.64px;top:598px;font-size:16px;color:#1c1f2b;letter-spacing:0.502px;">Mobile</span>
<span id="t45" style="left:274.60px;top:597px;font-size:15px;color:#7a7e89;">0</span>
<span id="t46" style="left:349.40px;top:250px;font-size:16px;color:#1c1f2b;letter-spacing:0.156px;">Security Vulnerabilities</span>
<span id="t47" style="left:326.93px;top:279px;font-size:21px;color:#1c1f2b;">0</span>
<span id="t48" style="left:342.64px;top:284px;font-size:16px;color:#1c1f2b;letter-spacing:-0.128px;">services</span>
<span id="t49" style="left:675.23px;top:250px;font-size:16px;color:#1c1f2b;letter-spacing:-0.054px;">Attack Exposure</span>
<span id="t50" style="left:650.93px;top:279px;font-size:21px;color:#1c1f2b;">0</span>
<span id="t51" style="left:666.64px;top:284px;font-size:16px;color:#1c1f2b;letter-spacing:-0.128px;">services</span>
<span id="t52" style="left:985.84px;top:250px;font-size:16px;color:#1c1f2b;letter-spacing:-0.397px;">Breached SLOs</span>
<span id="t53" style="left:962.93px;top:279px;font-size:21px;color:#1c1f2b;">0</span>
<span id="t54" style="left:978.64px;top:284px;font-size:16px;color:#1c1f2b;letter-spacing:-0.128px;">services</span>
<span id="t55" style="left:1297.24px;top:250px;font-size:16px;color:#1c1f2b;letter-spacing:-0.095px;">No One On-Call</span>
<span id="t56" style="left:1274.85px;top:279px;font-size:21px;color:#1c1f2b;">2</span>
<span id="t57" style="left:1290.64px;top:284px;font-size:16px;color:#1c1f2b;letter-spacing:-0.128px;">services</span>
<span id="t58" style="left:363.84px;top:345px;font-size:16px;color:#2367ba;letter-spacing:0.145px;">Hide Controls</span>
<span id="t59" style="left:513.67px;top:345px;font-size:16px;color:#1c1f2b;letter-spacing:-0.045px;">env:dev</span>
<span id="t60" style="left:622.98px;top:345px;font-size:16px;font-weight:700;color:#1c1f2b;">2</span>
<span id="t61" style="left:635.94px;top:345px;font-size:16px;color:#1c1f2b;letter-spacing:-0.257px;">services</span>
<span id="t62" style="left:732.80px;top:345px;font-size:16px;color:#1c1f2b;letter-spacing:-0.006px;">Scope APM data to:</span>
<span id="t63" style="left:893.37px;top:345px;font-size:16px;color:#1c1f2b;letter-spacing:0.384px;">datacenter:*</span>
<span id="t64" style="left:1489.54px;top:345px;font-size:16px;color:#1c1f2b;letter-spacing:-0.506px;">Export as CSV</span>
<span id="t65" style="left:384.29px;top:396px;font-size:14px;color:#1c1f2b;letter-spacing:-1.521px;-webkit-text-stroke:0.5px #1c1f2b;">TYPE</span>
<span id="t66" style="left:433.42px;top:396px;font-size:14px;color:#1c1f2b;letter-spacing:-0.899px;-webkit-text-stroke:0.5px #1c1f2b;">SERVICE</span>
<span id="t67" style="left:829.92px;top:396px;font-size:14px;color:#1c1f2b;letter-spacing:-0.439px;-webkit-text-stroke:0.5px #1c1f2b;">LAST DEPLOY</span>
<span id="t68" style="left:966.52px;top:396px;font-size:14px;color:#1c1f2b;letter-spacing:-1.025px;-webkit-text-stroke:0.5px #1c1f2b;">REQUESTS</span>
<span id="t69" style="left:1068.52px;top:396px;font-size:14px;color:#1c1f2b;letter-spacing:-0.807px;-webkit-text-stroke:0.5px #1c1f2b;">ERROR RATE</span>
<span id="t70" style="left:1178.52px;top:396px;font-size:14px;color:#1c1f2b;letter-spacing:-0.259px;-webkit-text-stroke:0.5px #1c1f2b;">P95 LATENCY</span>
<span id="t71" style="left:1284.19px;top:396px;font-size:14px;color:#1c1f2b;letter-spacing:-0.348px;-webkit-text-stroke:0.5px #1c1f2b;">INFRASTRUCTURE</span>
<span id="t72" style="left:1429.42px;top:396px;font-size:14px;color:#1c1f2b;letter-spacing:-0.275px;-webkit-text-stroke:0.5px #1c1f2b;">DASHBOARDS</span>
<span id="t73" style="left:1557.52px;top:396px;font-size:14px;color:#1c1f2b;letter-spacing:0.261px;-webkit-text-stroke:0.5px #1c1f2b;">MONITORS</span>
<span id="t74" style="left:433.30px;top:437px;font-size:18px;color:#1c1f2b;letter-spacing:0.946px;-webkit-text-stroke:0.55px #1c1f2b;">backend</span>
<span id="t75" style="left:544.91px;top:437px;font-size:15px;color:#1c1f2b;letter-spacing:0.765px;">env:dev</span>
<span id="t76" style="left:871.67px;top:438px;font-size:16px;color:#7f838e;letter-spacing:0.059px;">7d ago</span>
<span id="t77" style="left:948.00px;top:438px;font-size:17.5px;color:#1c1f2b;letter-spacing:0.551px;-webkit-text-stroke:0.55px #1c1f2b;">&lt; 0.1 req/s</span>
<span id="t78" style="left:1219.58px;top:438px;font-size:17.5px;color:#1c1f2b;letter-spacing:0.187px;-webkit-text-stroke:0.55px #1c1f2b;">1.14 s</span>
<span id="t79" style="left:1324.46px;top:439px;font-size:16px;color:#2367ba;">3</span>
<span id="t80" style="left:434.30px;top:488px;font-size:18px;color:#1c1f2b;letter-spacing:1.239px;-webkit-text-stroke:0.55px #1c1f2b;">frontend</span>
<span id="t81" style="left:547.41px;top:489px;font-size:15px;color:#1c1f2b;letter-spacing:0.731px;">env:dev</span>
<span id="t82" style="left:871.67px;top:489px;font-size:16px;color:#7f838e;letter-spacing:0.059px;">7d ago</span>
<span id="t83" style="left:948.00px;top:489px;font-size:17.5px;color:#1c1f2b;letter-spacing:0.551px;-webkit-text-stroke:0.55px #1c1f2b;">&lt; 0.1 req/s</span>
<span id="t84" style="left:1219.58px;top:489px;font-size:17.5px;color:#1c1f2b;letter-spacing:0.187px;-webkit-text-stroke:0.55px #1c1f2b;">1.47 s</span>
<span id="t85" style="left:1324.55px;top:490px;font-size:16px;color:#2367ba;">4</span>
<span id="t86" style="left:1444.80px;top:541px;font-size:16px;color:#1c1f2b;letter-spacing:-0.029px;">Services per page:</span>
<span id="t87" style="left:1596.00px;top:541px;font-size:16px;color:#1c1f2b;letter-spacing:0.331px;">50</span>
</div>
</body>
</html>
